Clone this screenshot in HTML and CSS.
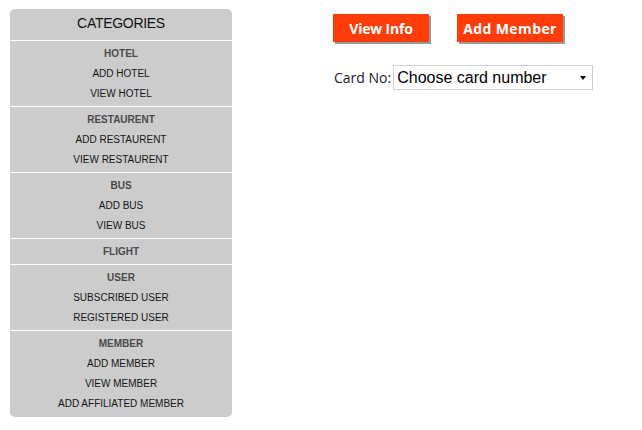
FILE: index.html
```html
<!DOCTYPE html>
<html>
<head>
<meta charset="utf-8">
<link rel="stylesheet" href="styles.css">
</head>
<body>
<div class="page">
  <div class="sidebar">
    <div class="cat-title">CATEGORIES</div>
    <div class="section">
      <div class="head">HOTEL</div>
      <div class="item">ADD HOTEL</div>
      <div class="item">VIEW HOTEL</div>
    </div>
    <div class="section">
      <div class="head">RESTAURENT</div>
      <div class="item">ADD RESTAURENT</div>
      <div class="item">VIEW RESTAURENT</div>
    </div>
    <div class="section">
      <div class="head">BUS</div>
      <div class="item">ADD BUS</div>
      <div class="item">VIEW BUS</div>
    </div>
    <div class="section">
      <div class="head">FLIGHT</div>
    </div>
    <div class="section">
      <div class="head">USER</div>
      <div class="item">SUBSCRIBED USER</div>
      <div class="item">REGISTERED USER</div>
    </div>
    <div class="section">
      <div class="head">MEMBER</div>
      <div class="item">ADD MEMBER</div>
      <div class="item">VIEW MEMBER</div>
      <div class="item">ADD AFFILIATED MEMBER</div>
    </div>
  </div>
  <div class="main">
    <div class="buttons">
      <button class="btn btn-view">View Info</button>
      <button class="btn btn-add">Add Member</button>
    </div>
    <div class="card-row">
      <label class="card-label">Card No:</label>
      <span class="select-wrap">
        <select class="card-select">
          <option>Choose card number</option>
        </select>
      </span>
    </div>
  </div>
</div>
</body>
</html>
```
FILE: styles.css
```css
html, body {
  margin: 0;
  padding: 0;
  background: #fff;
}
.page {
  display: flex;
  align-items: flex-start;
  padding: 9px 0 0 10px;
}
.sidebar {
  width: 222px;
  background: #cccccc;
  border-radius: 5px;
  font-family: "Liberation Sans", Arial, sans-serif;
  font-size: 10px;
  text-align: center;
  color: #111;
}
.cat-title {
  font-size: 14px;
  letter-spacing: -0.3px;
  line-height: 20px;
  padding: 4px 0 7px;
  color: #111;
}
.section {
  border-top: 1px solid #fff;
  padding: 3px 0 2px;
}
.section:last-child {
  padding-bottom: 3px;
}
.head, .item {
  line-height: 20px;
  height: 20px;
}
.head {
  font-weight: bold;
  color: #4a4a4a;
}
.item {
  color: #151515;
}
.main {
  margin-left: 101px;
  padding-top: 5px;
}
.buttons {
  display: flex;
  gap: 28px;
}
.btn {
  display: block;
  height: 28px;
  border: none;
  background: #ff3c0a;
  color: #fff;
  font-family: "Open Sans", sans-serif;
  font-weight: bold;
  font-size: 14px;
  letter-spacing: -0.2px;
  box-shadow: 2px 2px 0 #999;
  padding: 0;
  margin: 0;
  cursor: pointer;
}
.btn-view { width: 96px; }
.btn-add { width: 106px; letter-spacing: 0.4px; }
.card-row {
  display: flex;
  align-items: center;
  margin-top: 23px;
  margin-left: 1px;
}
.card-label {
  font-family: "Open Sans", sans-serif;
  font-size: 14px;
  color: #222;
  margin-right: 2px;
}
.select-wrap {
  position: relative;
  display: block;
}
.select-wrap::after {
  content: "";
  position: absolute;
  right: 7px;
  top: 11px;
  border-left: 3px solid transparent;
  border-right: 3px solid transparent;
  border-top: 4px solid #000;
}
.card-select {
  display: block;
  appearance: none;
  -webkit-appearance: none;
  width: 200px;
  height: 25px;
  border: 1px solid #cfcfcf;
  border-radius: 0;
  background: #fff;
  font-family: "Liberation Sans", Arial, sans-serif;
  font-size: 16px;
  color: #000;
  padding: 0 0 0 3px;
  margin: 0;
}
```
